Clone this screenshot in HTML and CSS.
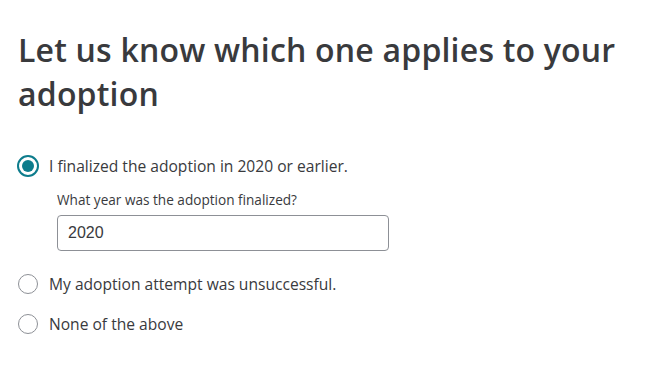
FILE: index.html
```html
<!DOCTYPE html>
<html lang="en">
<head>
<meta charset="utf-8">
<title>Adoption</title>
<link rel="stylesheet" href="styles.css">
</head>
<body>
<main class="page">
  <h1 class="title">Let us know which one applies to your adoption</h1>
  <div class="options">
    <div class="option option--selected">
      <label class="choice">
        <span class="radio radio--on"><span class="radio-dot"></span></span>
        <span class="choice-text">I finalized the adoption in 2020 or earlier.</span>
      </label>
      <div class="followup">
        <div class="field-label">What year was the adoption finalized?</div>
        <div class="field-input">2020</div>
      </div>
    </div>
    <div class="option">
      <label class="choice">
        <span class="radio"></span>
        <span class="choice-text">My adoption attempt was unsuccessful.</span>
      </label>
    </div>
    <div class="option">
      <label class="choice">
        <span class="radio"></span>
        <span class="choice-text">None of the above</span>
      </label>
    </div>
  </div>
</main>
</body>
</html>
```

FILE: styles.css
```css
html, body {
  margin: 0;
  padding: 0;
  background: #ffffff;
}

.page {
  padding: 28px 0 0 18px;
  font-family: "Open Sans", Lato, sans-serif;
  color: #393a3d;
}

.title {
  margin: 0;
  font-size: 32px;
  line-height: 44px;
  font-weight: 600;
  letter-spacing: 0.2px;
  color: #393a3d;
  width: 625px;
}

.options {
  margin-top: 39px;
  display: flex;
  flex-direction: column;
  gap: 18px;
}

.choice {
  display: flex;
  align-items: center;
  gap: 9px;
  height: 22px;
}

.radio {
  box-sizing: border-box;
  width: 20px;
  height: 20px;
  margin-left: 0;
  margin-right: 2px;
  border-radius: 50%;
  border: 1.5px solid #8d9096;
  display: flex;
  align-items: center;
  justify-content: center;
  flex: none;
}

.radio--on {
  width: 22px;
  height: 22px;
  margin-left: -1px;
  margin-right: 1px;
  border: 2px solid #0d7c8c;
}

.radio-dot {
  width: 12px;
  height: 12px;
  border-radius: 50%;
  background: #0d7c8c;
}

.choice-text {
  font-size: 15.6px;
  line-height: 22px;
  color: #393a3d;
}

.followup {
  margin: 14px 0 4px 39px;
}

.field-label {
  font-size: 13.6px;
  line-height: 18px;
  color: #393a3d;
}

.field-input {
  box-sizing: border-box;
  margin-top: 6px;
  width: 332px;
  height: 36px;
  border: 1px solid #8d9096;
  border-radius: 4px;
  padding: 0 10px;
  display: flex;
  align-items: center;
  font-family: "Liberation Sans", Arial, sans-serif;
  font-size: 16px;
  color: #393a3d;
}
```
